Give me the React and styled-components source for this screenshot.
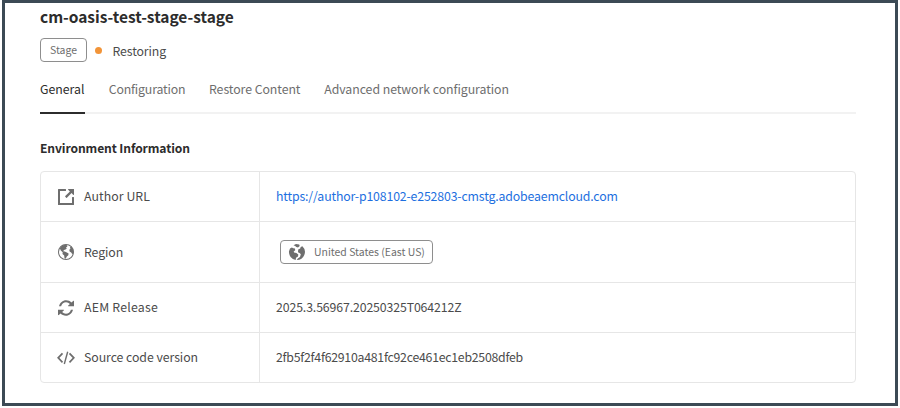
import React from "react";
import styled, { createGlobalStyle } from "styled-components";

const GlobalStyle = createGlobalStyle`
  * { box-sizing: border-box; }
  body { margin: 0; background: #fff; }
`;

const Frame = styled.main`
  width: 896px;
  height: 406px;
  margin-left: 2px;
  border: 3px solid #3c4a55;
  padding: 3px 39px 0 35px;
  background: #fff;
  font-family: "Noto Sans CJK SC", "Noto Sans", sans-serif;
  font-size: 12.3px;
  line-height: 20px;
  color: #4b4b4b;
  white-space: nowrap;
`;

const Title = styled.h1`
  margin: 0;
  font-size: 15.5px;
  line-height: 20px;
  height: 20px;
  font-weight: 700;
  letter-spacing: -0.03px;
  color: #2c2c2c;
`;

const StatusRow = styled.div`
  display: flex;
  align-items: center;
  height: 24px;
  margin-top: 12px;
`;

const Tag = styled.span`
  display: inline-flex;
  align-items: center;
  width: ${(p) => p.$width}px;
  height: 24px;
  padding-left: ${(p) => p.$inset}px;
  gap: 8px;
  border: 1px solid #8e8e8e;
  border-radius: 4px;
  font-size: 10.45px;
  line-height: 20px;
  color: #6e6e6e;
`;

const Dot = styled.i`
  width: 7px;
  height: 7px;
  margin: 0 11px 0 7.5px;
  border-radius: 50%;
  background: #f29438;
`;

const Text = styled.span`
  letter-spacing: ${(p) => p.$track || 0}px;
`;

const StatusText = styled(Text)`
  padding-top: 2px;
`;

const Tabs = styled.nav`
  display: flex;
  gap: 23.75px;
  height: 36px;
  margin-top: 16px;
  border-bottom: 2px solid #f2f2f2;
`;

const Tab = styled.a`
  width: ${(p) => p.$width}px;
  height: 36px;
  padding-top: 1px;
  letter-spacing: ${(p) => p.$track}px;
  color: ${(p) => (p.$active ? "#2c2c2c" : "#6e6e6e")};
  border-bottom: 2px solid ${(p) => (p.$active ? "#2c2c2c" : "transparent")};
`;

const SectionTitle = styled.h2`
  margin: 24px 0 13px;
  font-size: 12.1px;
  line-height: 20px;
  font-weight: 700;
  letter-spacing: -0.1px;
  color: #2c2c2c;
`;

const Table = styled.section`
  border: 1px solid #e6e6e6;
  border-radius: 4px;
`;

const Row = styled.div`
  display: grid;
  grid-template-columns: 219px 1fr;
  height: ${(p) => p.$height}px;
  & + & { border-top: 1px solid #e6e6e6; }
`;

const Label = styled.div`
  display: flex;
  align-items: center;
  gap: 9px;
  padding-left: 16px;
  border-right: 1px solid #e6e6e6;
`;

const Value = styled.div`
  display: flex;
  align-items: center;
  padding-left: ${(p) => p.$inset || 16}px;
`;

const CellText = styled(Text)`
  padding-bottom: 2px;
`;

const Link = styled.a`
  padding-bottom: 2px;
  color: #1d6fe0;
  letter-spacing: -0.15px;
`;

const Icon = styled.svg`
  flex: none;
  width: 18px;
  height: 18px;
  fill: #6e6e6e;
`;

const LinkOutIcon = () => (
  <Icon viewBox="0 0 18 18">
    <path d="M16.5,9h-1a.5.5,0,0,0-.5.5V15H3V3H8.5A.5.5,0,0,0,9,2.5v-1A.5.5,0,0,0,8.5,1h-7a.5.5,0,0,0-.5.5v15a.5.5,0,0,0,.5.5h15a.5.5,0,0,0,.5-.5v-7A.5.5,0,0,0,16.5,9Z" />
    <path d="M16.75,1H11.377A.4.4,0,0,0,11,1.4a.392.392,0,0,0,.1175.28L12.893,3.456,8.275,8.075a.5.5,0,0,0,0,.707l.9435.9435a.5.5,0,0,0,.707,0l4.6185-4.6185,1.7745,1.7765A.39.39,0,0,0,16.6,7a.4.4,0,0,0,.4-.377V1.25A.25.25,0,0,0,16.75,1Z" />
  </Icon>
);

const GlobeOutlineIcon = () => (
  <Icon viewBox="0 0 18 18">
    <path fillRule="evenodd" d="M9 1a8 8 0 1 0 0 16A8 8 0 0 0 9 1Zm0 1a7 7 0 1 1 0 14A7 7 0 0 1 9 2Z" />
    <path d="M2.8 5.200 5 2.600l3-.8 2 .5.4 1.200-1.400 1.100.8.9-1.300 1.100-1.500.3-.8 1.300 1.500.4 2.200 1 1.700 1-.3 1.700-1.500 1.200-1.100 2.300-1.200-.5-.3-2.700-1.700-1.700.2-1.700L3.800 7.600Z" />
    <path d="m13 4 1.600-.2 1.500 2.600.4 2.600-1 2.600-1.300-2.100-1.600-.9-.3-1.800 1.100-1.100Z" />
  </Icon>
);

const GlobeIcon = () => (
  <Icon viewBox="0 0 18 18">
    <path d="M1 8.200 2 5.600l1.900-1 1.400.7L7 5.500l.2 1.700-1.500 1.200.4 1.200 2.300.5 1.900 1.300-.3 2-2 1.300-.3 2.200A8 8 0 0 1 1 8.200Z" />
    <path d="M5.500 2.200 8 1l3.200.4.5 1.500-1.700 1.500-1.800-.3-1-1Z" />
    <path d="m10.200 6.400 2-.8.5-1.700 1.700-.7A8 8 0 0 1 8.800 17l1-1.400 2.200-1.500.8-2.900-.9-1-1.900-.9Z" />
  </Icon>
);

const RefreshIcon = () => (
  <Icon viewBox="0 0 18 18">
    <path d="M2 7.300C2.900 3.700 5.700 1.300 9.100 1.300c2.200 0 4 .8 5.300 2.200L16.200 1.900c.3-.3.8-.1.800.3v5.100h-5.500c-.4 0-.6-.5-.3-.8l1.700-1.600A5.400 5.400 0 0 0 9 3.300C6.700 3.300 4.900 4.700 4.100 7.300Z" />
    <path d="M16 10.700c-.9 3.600-3.700 6-7.100 6-2.200 0-4-.8-5.300-2.200L1.800 16.100c-.3.3-.8.1-.8-.3v-5.100h5.500c.4 0 .6.500.3.800l-1.700 1.600A5.400 5.400 0 0 0 9 14.700c2.300 0 4.100-1.400 4.900-4Z" />
  </Icon>
);

const CodeLines = styled(Icon)`
  fill: none;
  stroke: #6e6e6e;
  stroke-width: 1.7;
`;

const CodeIcon = () => (
  <CodeLines viewBox="0 0 18 18">
    <path d="M5.500 4.300 1.200 8.800l4.300 4.500M12.500 4.300 16.800 8.800l-4.300 4.500" />
    <path strokeWidth="1.400" d="M10.700 2.700 7.300 15" />
  </CodeLines>
);

export default function App() {
  return (
    <>
      <GlobalStyle />
      <Frame>
        <Title>cm-oasis-test-stage-stage</Title>
        <StatusRow>
          <Tag $width={47} $inset={9}>Stage</Tag>
          <Dot />
          <StatusText $track={-0.11}>Restoring</StatusText>
        </StatusRow>
        <Tabs>
          <Tab $active $width={45} $track={0}>General</Tab>
          <Tab $width={76.5} $track={-0.17}>Configuration</Tab>
          <Tab $width={91.5} $track={-0.055}>Restore Content</Tab>
          <Tab $width={185} $track={-0.045}>Advanced network configuration</Tab>
        </Tabs>
        <SectionTitle>Environment Information</SectionTitle>
        <Table>
          <Row $height={49}>
            <Label><LinkOutIcon /><CellText $track={0.07}>Author URL</CellText></Label>
            <Value><Link>https://author-p108102-e252803-cmstg.adobeaemcloud.com</Link></Value>
          </Row>
          <Row $height={61}>
            <Label><GlobeOutlineIcon /><Text $track={-0.09}>Region</Text></Label>
            <Value $inset={20}>
              <Tag $width={153} $inset={7}><GlobeIcon />United States (East US)</Tag>
            </Value>
          </Row>
          <Row $height={50}>
            <Label><RefreshIcon /><CellText $track={0.22}>AEM Release</CellText></Label>
            <Value><CellText $track={-0.116}>2025.3.56967.20250325T064212Z</CellText></Value>
          </Row>
          <Row $height={50}>
            <Label><CodeIcon /><CellText $track={-0.054}>Source code version</CellText></Label>
            <Value><CellText $track={-0.25}>2fb5f2f4f62910a481fc92ce461ec1eb2508dfeb</CellText></Value>
          </Row>
        </Table>
      </Frame>
    </>
  );
}
